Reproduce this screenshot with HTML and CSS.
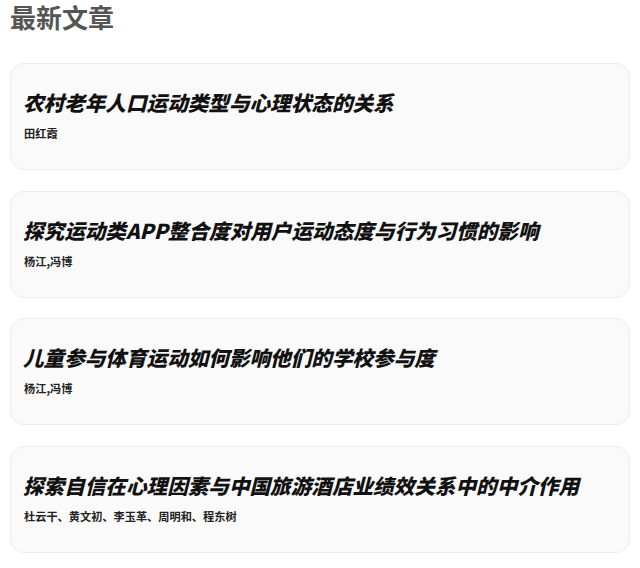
FILE: index.html
```html
<!DOCTYPE html>
<html lang="zh-CN">
<head>
<meta charset="utf-8">
<title>最新文章</title>
<link rel="stylesheet" href="styles.css">
</head>
<body>
<main class="latest">
  <h1 class="latest-title">最新文章</h1>
  <ul class="article-list">
    <li class="article-card">
      <h2 class="article-title">农村老年人口运动类型与心理状态的关系</h2>
      <p class="article-authors">田红霞</p>
    </li>
    <li class="article-card">
      <h2 class="article-title">探究运动类APP整合度对用户运动态度与行为习惯的影响</h2>
      <p class="article-authors">杨江,冯博</p>
    </li>
    <li class="article-card">
      <h2 class="article-title">儿童参与体育运动如何影响他们的学校参与度</h2>
      <p class="article-authors">杨江,冯博</p>
    </li>
    <li class="article-card">
      <h2 class="article-title">探索自信在心理因素与中国旅游酒店业绩效关系中的中介作用</h2>
      <p class="article-authors">杜云干、黄文初、李玉革、周明和、程东树</p>
    </li>
  </ul>
</main>
</body>
</html>
```

FILE: styles.css
```css
* {
  box-sizing: border-box;
}

body {
  margin: 0;
  background: #ffffff;
  font-family: "Noto Sans CJK SC", "Noto Sans", sans-serif;
  color: #111111;
}

.latest {
  padding: 0 10px;
}

.latest-title {
  margin: 0 0 29px;
  font-size: 26px;
  line-height: 34px;
  font-weight: 700;
  color: #555555;
}

.article-list {
  list-style: none;
  margin: 0;
  padding: 0;
  display: flex;
  flex-direction: column;
  gap: 20.5px;
}

.article-card {
  height: 107px;
  padding: 22px 12px 0;
  background: #fafafa;
  border: 1px solid #ededed;
  border-radius: 14px;
}

.article-title {
  margin: 0;
  font-size: 20.6px;
  line-height: 32px;
  font-weight: 900;
  font-style: italic;
  color: #111111;
}

.article-authors {
  margin: 7px 0 0;
  padding-left: 1px;
  font-size: 11.2px;
  line-height: 16px;
  font-weight: 700;
  color: #222222;
}
```
